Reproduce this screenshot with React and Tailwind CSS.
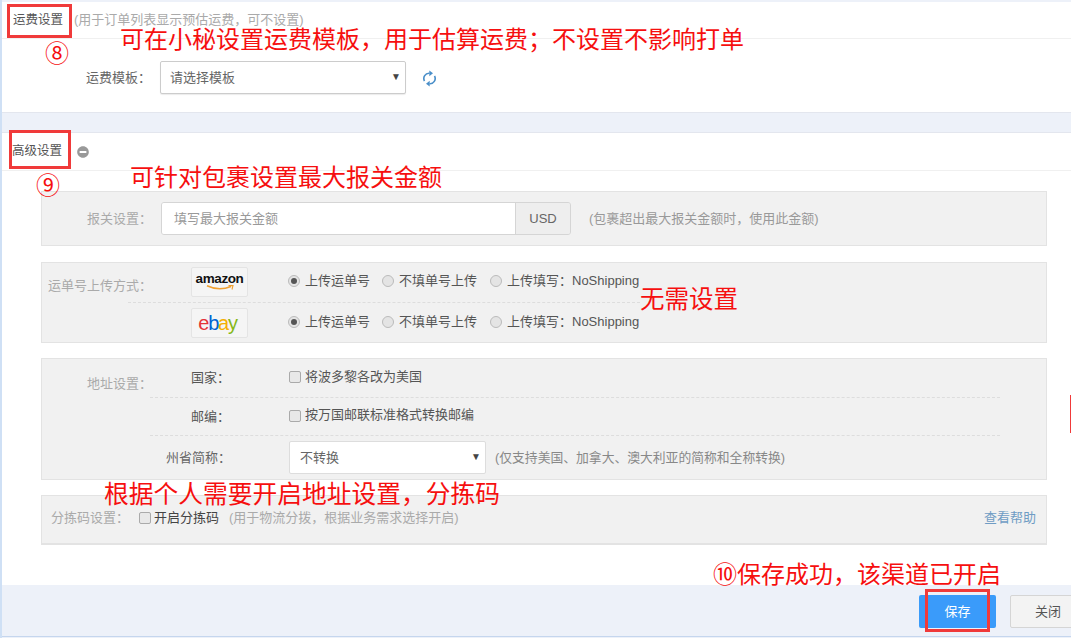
import React from 'react'
import { FaMinusCircle } from 'react-icons/fa'

const Radio = ({ checked, label }) => (
  <label className="flex items-center gap-[5px] whitespace-nowrap">
    <span className="flex size-[12px] items-center justify-center rounded-full border border-[#bbb] bg-[#e4e4e4]">
      {checked && <span className="size-[6px] rounded-full bg-[#555]" />}
    </span>
    <span>{label}</span>
  </label>
)

const Check = ({ className }) => (
  <span className={`block size-[12px] rounded-[2px] border border-[#aaa] bg-[#e8e8e8] ${className}`} />
)

const UploadRow = ({ children }) => (
  <div className="flex h-[30px] items-center">
    <div className="flex h-[30px] w-[57px] flex-col items-center justify-center rounded-[2px] border border-[#e4e4e4] bg-[#f5f5f5]">
      {children}
    </div>
    <div className="mb-[2px] ml-[40px] flex items-center text-[#555]">
      <div className="w-[94px]"><Radio checked label="上传运单号" /></div>
      <div className="w-[108px]"><Radio label="不填单号上传" /></div>
      <Radio label="上传填写：NoShipping" />
    </div>
  </div>
)

const Note = ({ className, children }) => (
  <div className={`absolute whitespace-nowrap leading-[30px] text-[#f60f0f] ${className}`}>{children}</div>
)

const Mark = ({ className }) => (
  <div className={`absolute border-[3px] border-[#f03a3a] ${className}`} />
)

const RefreshIcon = () => (
  <svg width="13" height="17" viewBox="0 0 13 17" fill="none" className="ml-[17px] mt-[1px]">
    <path d="M1.5 11 A5.2 5.2 0 0 1 6.5 3.3" stroke="#4a8fc9" strokeWidth="1.6" />
    <path d="M6.3 0.4 L10 3.3 L6.3 6.2 Z" fill="#4a8fc9" />
    <path d="M11.5 6 A5.2 5.2 0 0 1 6.5 13.7" stroke="#4a8fc9" strokeWidth="1.6" />
    <path d="M6.7 10.8 L3 13.7 L6.7 16.6 Z" fill="#4a8fc9" />
  </svg>
)

export default function App() {
  return (
    <div className="relative h-[638px] w-[1071px] overflow-hidden border-l-2 border-[#cfe0f5] bg-[#edf1f9] font-['Liberation_Sans','Noto_Sans_CJK_SC',sans-serif] text-[13px] text-[#666]">
      <div className="pt-[2px]">
        <section className="h-[111px] border-b border-[#e3e6ee] bg-white">
          <div className="flex h-[37px] items-center border-b border-[#f0f0f0] pl-[11px]">
            <span className="text-[12.5px] text-[#555]">运费设置</span>
            <span className="ml-[11px] text-[#aaa]">(用于订单列表显示预估运费，可不设置)</span>
          </div>
          <div className="mt-[22px] flex items-center pl-[84px]">
            <span className="w-[74px] text-[#666]">运费模板：</span>
            <div className="flex h-[33px] w-[246px] items-center justify-between rounded-[2px] border border-[#ccc] bg-white pl-[9px] pr-[4px] shadow-[0_1px_1px_rgba(0,0,0,0.08)]">
              <span>请选择模板</span>
              <span className="mb-[3px] text-[10px] text-[#444]">▼</span>
            </div>
            <RefreshIcon />
          </div>
        </section>

        <section className="mt-[19px] h-[453px] border-t border-t-[#e3e6ee] bg-white">
          <div className="flex h-[38px] items-center border-b border-[#f0f0f0] pl-[10px]">
            <span className="text-[12.5px] text-[#555]">高级设置</span>
            <FaMinusCircle className="ml-[15px] text-[12px] text-[#999]" />
          </div>

          <div className="ml-[39px] mt-[20px] w-[1006px]">
            <div className="flex h-[55px] items-center border border-[#e3e3e3] bg-[#f1f1f1]">
              <span className="w-[110px] text-right text-[#aaa]">报关设置：</span>
              <div className="ml-[9px] flex h-[33px] w-[410px] overflow-hidden rounded-[3px] border border-[#d5d5d5]">
                <div className="flex w-[354px] items-center border-r border-[#d5d5d5] bg-white pl-[12px] text-[#999]">填写最大报关金额</div>
                <div className="flex flex-1 items-center justify-center bg-[#eee] text-[#666]">USD</div>
              </div>
              <span className="ml-[18px] text-[#999]">(包裹超出最大报关金额时，使用此金额)</span>
            </div>

            <div className="mt-[16px] flex h-[81px] border border-[#e3e3e3] bg-[#f1f1f1]">
              <span className="ml-[6px] mt-[13px] w-[80px] whitespace-nowrap text-[#aaa]">运单号上传方式：</span>
              <div className="w-[512px] pt-[4px]">
                <div className="pl-[63px]">
                  <UploadRow>
                    <span className="text-[13.5px] font-bold leading-[12px] tracking-[-0.4px] text-[#111]">amazon</span>
                    <svg width="32" height="6" viewBox="0 0 32 6" fill="none">
                      <path d="M3 0.8 Q15 6.5 27 1.5" stroke="#f0a030" strokeWidth="1.5" />
                      <path d="M24.5 0.6 L29 0.6 L28 4.5" stroke="#f0a030" strokeWidth="1.1" />
                    </svg>
                  </UploadRow>
                </div>
                <div className="my-[5px] border-t border-dashed border-[#ddd]" />
                <div className="pl-[63px]">
                  <UploadRow>
                    <span className="mr-[4px] text-[20px] leading-none tracking-[-1.2px]">
                      <span className="text-[#e53238]">e</span>
                      <span className="text-[#0064d2]">b</span>
                      <span className="text-[#f5af02]">a</span>
                      <span className="text-[#86b817]">y</span>
                    </span>
                  </UploadRow>
                </div>
              </div>
            </div>

            <div className="mt-[15px] flex h-[122px] border border-[#e3e3e3] bg-[#f1f1f1]">
              <span className="mt-[15px] w-[110px] text-right text-[#aaa]">地址设置：</span>
              <div className="-ml-[2px] w-[850px]">
                <div className="flex h-[39px] items-center border-b border-dashed border-[#ddd] pl-[41px]">
                  <span className="w-[98px] text-[#555]">国家：</span>
                  <Check className="mb-[2px]" />
                  <span className="mb-[3px] ml-[4px] text-[#555]">将波多黎各改为美国</span>
                </div>
                <div className="flex h-[38px] items-center border-b border-dashed border-[#ddd] pl-[41px]">
                  <span className="w-[98px] text-[#555]">邮编：</span>
                  <Check className="mb-[2px]" />
                  <span className="mb-[3px] ml-[4px] text-[#555]">按万国邮联标准格式转换邮编</span>
                </div>
                <div className="mt-[5px] flex items-center pl-[16px]">
                  <span className="w-[123px] text-[#666]">州省简称：</span>
                  <div className="flex h-[33px] w-[197px] items-center justify-between rounded-[2px] border border-[#ddd] bg-white pl-[10px] pr-[4px]">
                    <span>不转换</span>
                    <span className="mb-[3px] text-[10px] text-[#444]">▼</span>
                  </div>
                  <span className="ml-[9px] whitespace-nowrap text-[12.8px] text-[#888]">(仅支持美国、加拿大、澳大利亚的简称和全称转换)</span>
                </div>
              </div>
            </div>

            <div className="mt-[15px] flex h-[50px] items-center border border-b-2 border-[#e3e3e3] bg-[#f1f1f1] pb-[3px] pl-[9px] pr-[10px]">
              <span className="w-[88px] text-[#aaa]">分拣码设置：</span>
              <Check />
              <span className="ml-[3px] text-[#444]">开启分拣码</span>
              <span className="ml-[10px] text-[#aaa]">(用于物流分拨，根据业务需求选择开启)</span>
              <span className="ml-auto text-[#6f9cc4]">查看帮助</span>
            </div>
          </div>
        </section>

        <footer className="flex h-[52px] items-start border-b border-[#c5d6ee] pl-[917px] pt-[10px]">
          <button className="h-[33px] w-[77px] shrink-0 rounded-[2px] bg-[#3a9bfa] text-white">保存</button>
          <button className="ml-[14px] h-[33px] w-[76px] shrink-0 rounded-l-[2px] border border-[#d5d5d5] bg-[#f3f3f3] text-[#555]">关闭</button>
        </footer>
      </div>

      <Mark className="left-[5px] top-[4px] h-[34px] w-[65px]" />
      <Mark className="left-[7px] top-[130px] h-[39px] w-[62px]" />
      <Mark className="left-[923px] top-[589px] h-[43px] w-[65px]" />
      <div className="absolute left-[1068px] top-[395px] h-[38px] w-[1px] bg-[#f03a3a]" />

      <Note className="left-[43px] top-[39px] text-[24px]">⑧</Note>
      <Note className="left-[118px] top-[25px] text-[24px]">可在小秘设置运费模板，用于估算运费；不设置不影响打单</Note>
      <Note className="left-[34px] top-[171px] text-[24px]">⑨</Note>
      <Note className="left-[128px] top-[163px] text-[24px]">可针对包裹设置最大报关金额</Note>
      <Note className="left-[638px] top-[285px] text-[24.5px]">无需设置</Note>
      <Note className="left-[102px] top-[480px] text-[24.75px]">根据个人需要开启地址设置，分拣码</Note>
      <Note className="left-[711px] top-[560px] text-[24px]">⑩保存成功，该渠道已开启</Note>
    </div>
  )
}
